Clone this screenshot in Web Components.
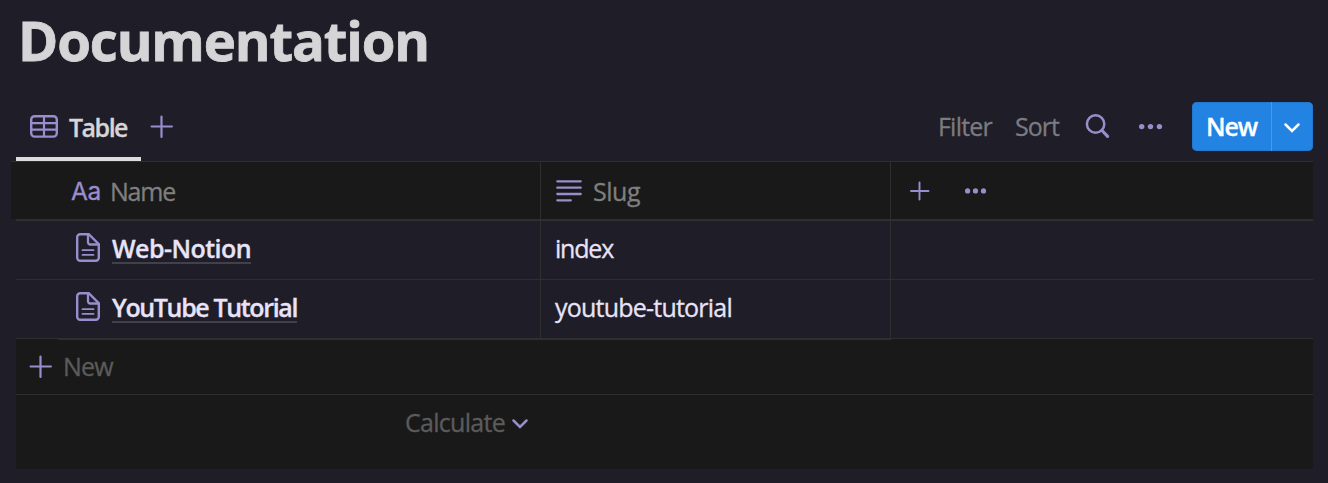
<!DOCTYPE html>
<html lang="en">
<head>
<meta charset="utf-8">
<title>Documentation</title>
<style>
html,body{margin:0;height:100%;background:#1f1d27}
body{font-family:"Open Sans","Noto Sans",sans-serif;font-size:25px;overflow:hidden}
</style>
</head>
<body>
<doc-database></doc-database>
<script>
const define = (name, html, setup) => {
  const t = document.createElement('template');
  t.innerHTML = html;
  customElements.define(name, class extends HTMLElement {
    connectedCallback() {
      if (this.shadowRoot) return;
      this.attachShadow({mode: 'open'}).append(t.content.cloneNode(true));
      if (setup) setup(this);
    }
  });
};

/* A label whose tracking is tuned so that it fills the width given in "w". */
define('ui-label', `<style>
:host{display:block;flex:none;white-space:pre;line-height:32px;box-sizing:border-box;-webkit-text-stroke:.3px currentColor}
span{display:inline-block}
</style><span><slot></slot></span>`, el => {
  const w = +el.getAttribute('w'), s = el.shadowRoot.querySelector('span');
  const natural = s.getBoundingClientRect().width;
  s.style.letterSpacing = ((w - natural) / el.textContent.length) + 'px';
  el.style.width = w + 'px';
});

const ICONS = {
  table: [28, 23, '<rect x="1.2" y="1.2" width="25.6" height="20.4" rx="3.4" stroke-width="2.4"/><path d="M14 1v21M1 8.1h26M1 14.7h26" stroke-width="2.2"/>'],
  plus: [22, 22, '<path d="M10.500 .6v20.300M.6 10.500h20.300" stroke-width="2.200" stroke-linecap="round"/>'],
  plusSmall: [18, 18, '<path d="M8.500 .5v17M0 9h17.500" stroke-width="1.900" stroke-linecap="round"/>'],
  search: [24, 25, '<circle cx="9.600" cy="10" r="8.700" stroke-width="2.500"/><path d="M16 16.500l5.600 5.900" stroke-width="3.200" stroke-linecap="round"/>'],
  dots: [24, 6, '<g fill="currentColor" stroke="none"><circle cx="2.700" cy="2.600" r="2.700"/><circle cx="11.500" cy="2.600" r="2.700"/><circle cx="20.400" cy="2.600" r="2.700"/></g>'],
  dotsSmall: [22, 6, '<g fill="currentColor" stroke="none"><circle cx="2.600" cy="2.900" r="2.600"/><circle cx="10.500" cy="2.900" r="2.600"/><circle cx="18.500" cy="2.900" r="2.600"/></g>'],
  chevron: [16, 10, '<path d="M1.500 1.500L8 8l6.500-6.500" stroke-width="2.500" stroke-linecap="round"/>'],
  lines: [26, 23, '<path d="M1.300 2.300h23.400M1.300 8.700h23.400M1.300 15h23.400M1.300 21.300h13.500" stroke-width="2.300" stroke-linecap="round"/>'],
  page: [24, 29, '<path d="M4.200 1.200h8.600L22.800 11.200v13.600a3 3 0 0 1-3 3H4.200a3 3 0 0 1-3-3V4.200a3 3 0 0 1 3-3z" stroke-width="2.400"/><path d="M12 1.500v7.800a2.200 2.200 0 0 0 2.200 2.200h8.300" stroke-width="2.300"/><path d="M6.500 17.200h11M6.500 21.900h11" stroke-width="1.800" stroke-linecap="round"/>']
};
define('ui-icon', `<style>
:host{display:block;flex:none;color:#9a8dcd}
:host([white]){color:#fff}
svg{display:block;fill:none;stroke:currentColor;overflow:visible}
</style><svg></svg>`, el => {
  const [w, h, body] = ICONS[el.getAttribute('name')];
  const s = el.shadowRoot.querySelector('svg');
  s.setAttribute('width', w); s.setAttribute('height', h);
  s.setAttribute('viewBox', `0 0 ${w} ${h}`);
  s.innerHTML = body;
});

define('new-button', `<style>
:host{display:flex;flex:none;width:121px;height:49px;box-sizing:border-box;border-radius:5px;background:#2383e2;box-shadow:inset 0 0 0 1px #2079d0;color:#fff;font-weight:600}
.main{width:80px;box-sizing:border-box;padding:8px 0 0 14px;border-right:1px solid #4b98e7}
.more{flex:1;display:flex;justify-content:center;padding-top:21px;padding-right:2px}
</style><div class="main"><ui-label w="51">New</ui-label></div><div class="more"><ui-icon name="chevron" white></ui-icon></div>`);

define('view-bar', `<style>
:host{display:flex;height:59px;padding:0 0 0 16px;width:1313px;box-sizing:border-box;align-items:flex-start}
.tab{width:125px;height:59px;box-sizing:border-box;border-bottom:4px solid #dcdbdd;display:flex;padding-left:14px;color:#d6d5d7;font-weight:600}
.tab ui-icon{margin:13px 11px 0 0}
.tab ui-label{margin-top:9px}
.add{margin:14px 0 0 10px}
.right{margin-left:auto;display:flex;color:#7c7b7f}
.right>ui-label{margin-top:8px}
.search{margin:12px 29px 0 27px}
.dots{margin:22px 29px 0 0}
.sort{margin-left:23px}
</style>
<div class="tab"><ui-icon name="table"></ui-icon><ui-label w="58">Table</ui-label></div>
<ui-icon class="add" name="plus"></ui-icon>
<div class="right"><ui-label w="54">Filter</ui-label><ui-label class="sort" w="44">Sort</ui-label>
<ui-icon class="search" name="search"></ui-icon><ui-icon class="dots" name="dots"></ui-icon><new-button></new-button></div>`);

define('table-head', `<style>
:host{display:block;height:60px;margin-left:11px;width:1302px;background:linear-gradient(#2f2f2f 0 1px,#191919 1px 58px,transparent 58px);box-sizing:border-box;color:#7f7f7f}
.row{display:grid;grid-template-columns:524px 350px 1fr;margin-left:5px;height:60px;box-sizing:border-box;padding-top:1px;border-bottom:2px solid #2f2f2f}
.row>div{display:flex;box-sizing:border-box}
.line{box-shadow:1px 0 #2f2f2f}
ui-label{margin-top:13px}
.aa{color:#9a8dcd;font-family:Inter,sans-serif;font-size:24.500px;margin:13px 9px 0 55px}
</style><div class="row">
<div class="line"><ui-label class="aa" w="30">Aa</ui-label><ui-label w="65">Name</ui-label></div>
<div class="line"><ui-icon name="lines" style="margin:17px 11px 0 16px"></ui-icon><ui-label w="47">Slug</ui-label></div>
<div><ui-icon name="plusSmall" style="margin:20px 36px 0 21px"></ui-icon><ui-icon name="dotsSmall" style="margin-top:26px"></ui-icon></div>
</div>`);

define('table-row', `<style>
:host{display:grid;grid-template-columns:524px 350px 1fr;margin-left:16px;width:1297px;height:59px;box-sizing:border-box;border-bottom:1px solid #2f2f2f;color:#e8e3f8}
div{display:flex;box-sizing:border-box}
.line{box-shadow:1px 0 #2f2f2f}
.name{padding-left:60px;font-weight:600}
.name ui-icon{margin:12px 12px 0 0}
::slotted(ui-label){margin-top:11px}
::slotted([slot=name]){height:32px;border-bottom:2px solid #42404a}
.slug{padding-left:15px}
</style>
<div class="name line"><ui-icon name="page"></ui-icon><slot name="name"></slot></div>
<div class="slug line"><slot name="slug"></slot></div><div></div>`);

define('table-foot', `<style>
:host{display:block;margin-left:16px;width:1297px;height:130px;background:#191919;color:#5b5b5b}
.edge{height:1px;width:833px;margin-left:42px;background:#2f2f2f}
.new{height:55px;box-sizing:border-box;border-bottom:1px solid #2f2f2f;display:flex;padding-left:14px}
.new ui-icon{margin:16px 11px 0 0}
.new ui-label{margin-top:10px}
.calc{display:flex;padding-left:389px}
.calc ui-label{margin:11px 7px 0 0}
.calc ui-icon{margin-top:24px}
</style><div class="edge"></div>
<div class="new"><ui-icon name="plus"></ui-icon><ui-label w="50">New</ui-label></div>
<div class="calc"><ui-label w="100">Calculate</ui-label><ui-icon name="chevron"></ui-icon></div>`);

define('doc-database', `<style>
:host{display:block}
h1{margin:0;height:102px;box-sizing:border-box;padding:2px 0 0 18px;font-size:54.500px;font-weight:700;color:#d5d4d6}
h1 ui-label{line-height:76px;-webkit-text-stroke-width:.8px}
</style>
<h1><ui-label w="411">Documentation</ui-label></h1>
<view-bar></view-bar>
<table-head></table-head>
<table-row><ui-label slot="name" w="139">Web-Notion</ui-label><ui-label slot="slug" w="58">index</ui-label></table-row>
<table-row><ui-label slot="name" w="185">YouTube Tutorial</ui-label><ui-label slot="slug" w="177">youtube-tutorial</ui-label></table-row>
<table-foot></table-foot>`);
</script>
</body>
</html>
